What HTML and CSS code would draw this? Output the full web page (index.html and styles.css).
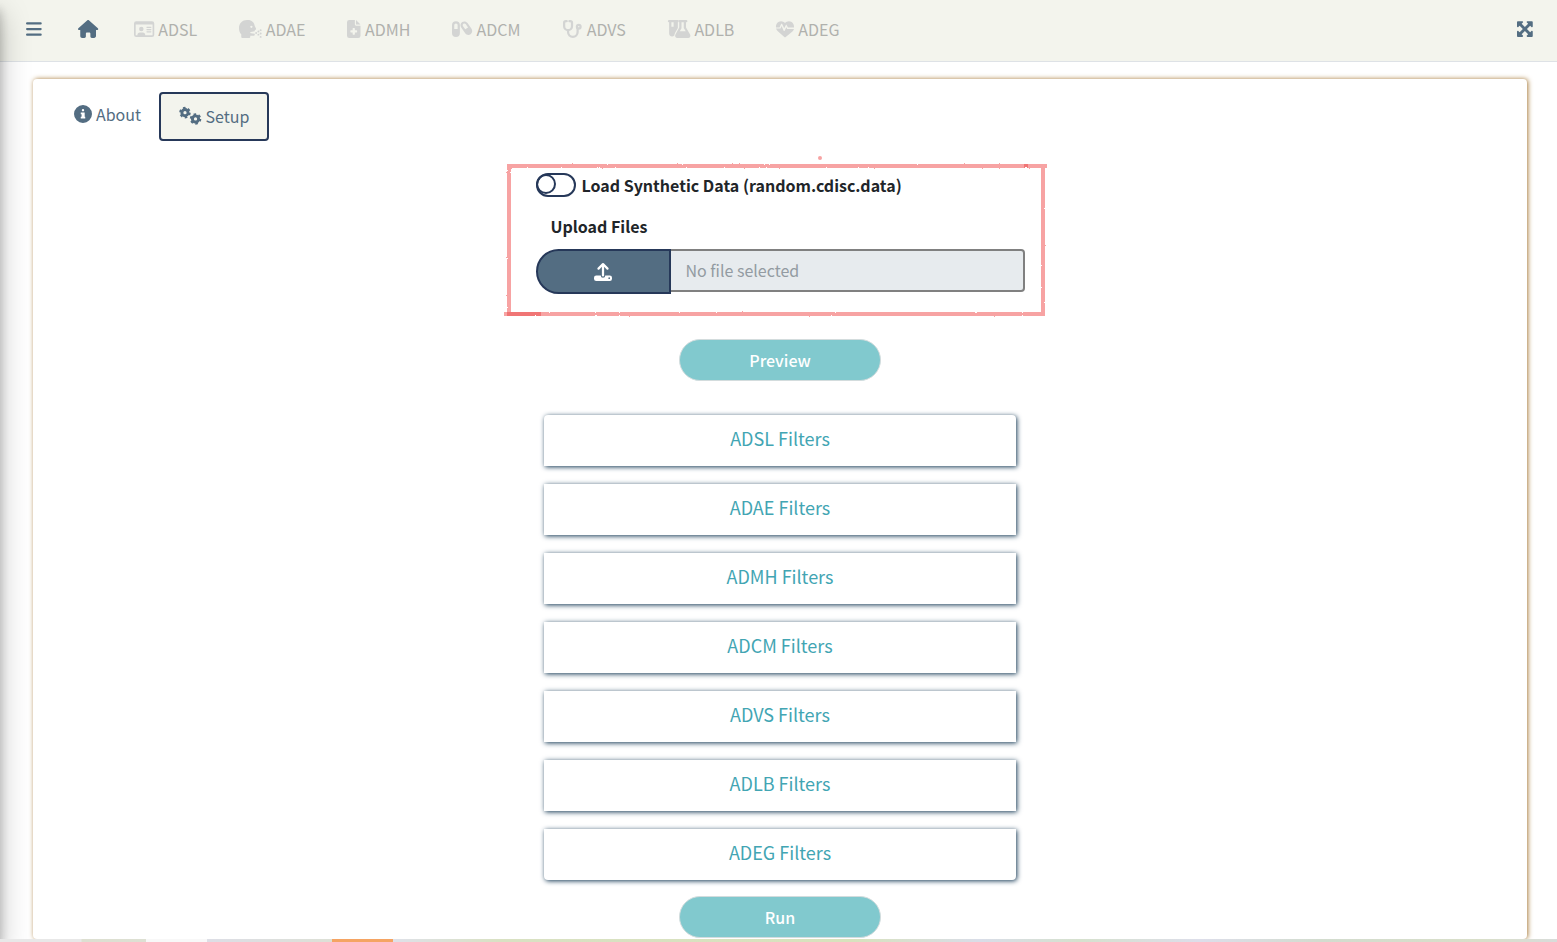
FILE: index.html
```html
<!DOCTYPE html>
<html lang="en">
<head>
<meta charset="utf-8">
<title>Clinical Data Explorer</title>
<link rel="stylesheet" href="styles.css">
</head>
<body>
<aside class="sidebar" aria-hidden="true"></aside>
<header class="navbar">
  <button class="icon-button" type="button" aria-label="Toggle menu">
    <svg class="icon" viewBox="0 0 448 512"><path d="M32 64H416a32 32 0 0 1 0 64H32a32 32 0 0 1 0-64zM32 224H416a32 32 0 0 1 0 64H32a32 32 0 0 1 0-64zM32 384H416a32 32 0 0 1 0 64H32a32 32 0 0 1 0-64z"/></svg>
  </button>
  <a class="home" href="#" aria-label="Home">
    <svg class="icon" viewBox="0 0 576 512"><path d="M575.800 255.500c0 18-15 32.100-32 32.100h-32l.7 160.200c0 36-24 64.200-56.500 64.200H392c-22 0-40-18-40-40v-88c0-17.700-14.300-32-32-32h-64c-17.700 0-32 14.300-32 32v88c0 22-18 40-40 40h-64c-32 0-56-24-56-56V287.600H32c-18 0-32-14-32-32.100 0-9 3-17 10-24L266.400 8c7-7 15-8 22-8s15 2 21 7l255.400 224.500c8 7 12 15 11 24z"/></svg>
  </a>
  <nav class="tabs">
    <a href="#"><svg class="icon" viewBox="0 0 576 512"><path fill-rule="evenodd" d="M64 32H512a64 64 0 0 1 64 64V416a64 64 0 0 1-64 64H64A64 64 0 0 1 0 416V96A64 64 0 0 1 64 32zM48 128V416a16 16 0 0 0 16 16H96c0-53 30-80 70-80h84c40 0 70 27 70 80H512a16 16 0 0 0 16-16V128zM208 192a64 64 0 1 1 0 128 64 64 0 0 1 0-128zM368 192H480a16 16 0 0 1 0 32H368a16 16 0 0 1 0-32zM368 256H480a16 16 0 0 1 0 32H368a16 16 0 0 1 0-32zM368 320H480a16 16 0 0 1 0 32H368a16 16 0 0 1 0-32z"/></svg>ADSL</a>
    <a href="#"><svg class="icon" viewBox="0 0 640 512"><path fill-rule="evenodd" d="M224 0h32c106 0 178 68 192 170l32 63c12 23 0 55-32 55v32l-112 18a18 18 0 0 0 0 36l112 18v24a32 32 0 0 1-32 32h-96v32a32 32 0 0 1-32 32H96a32 32 0 0 1-32-32v-72C22 366 0 303 0 224 0 92 100 0 224 0zM352 160a32 32 0 1 0 0 64 32 32 0 0 0 0-64z"/><g><circle cx="616" cy="288" r="28"/><circle cx="552" cy="328" r="28"/><circle cx="488" cy="368" r="28"/><circle cx="616" cy="384" r="28"/><circle cx="552" cy="416" r="28"/><circle cx="616" cy="480" r="28"/></g></svg>ADAE</a>
    <a href="#"><svg class="icon" viewBox="0 0 384 512"><path fill-rule="evenodd" d="M64 0H224V128a32 32 0 0 0 32 32H384V448a64 64 0 0 1-64 64H64a64 64 0 0 1-64-64V64A64 64 0 0 1 64 0zM256 0V128H384zM160 240v48h-48a16 16 0 0 0-16 16v32a16 16 0 0 0 16 16h48v48a16 16 0 0 0 16 16h32a16 16 0 0 0 16-16v-48h48a16 16 0 0 0 16-16v-32a16 16 0 0 0-16-16h-48v-48a16 16 0 0 0-16-16h-32a16 16 0 0 0-16 16z"/></svg>ADMH</a>
    <a href="#"><svg class="icon" viewBox="0 0 576 512"><path fill-rule="evenodd" d="M112 32A112 112 0 0 1 224 144V368a112 112 0 0 1-224 0V144A112 112 0 0 1 112 32zM64 144V256H160V144a48 48 0 0 0-96 0z"/><path fill-rule="evenodd" d="M262 214c-35-50-24-118 26-154s118-24 154 26L555 249c35 50 24 118-26 154s-118 24-154-26zM314 178l62 88 80-56-62-88c-17-22-47-28-68-12s-28 46-12 68z"/></svg>ADCM</a>
    <a href="#"><svg class="icon" viewBox="0 0 576 512"><g class="outline"><path d="M104 32H80C52 32 32 46 32 78V176a112 112 0 0 0 224 0V78C256 46 236 32 208 32H184M144 290V344a136 136 0 0 0 272 0V238"/><circle cx="448" cy="192" r="52"/></g></svg>ADVS</a>
    <a href="#"><svg class="icon" viewBox="0 0 640 512"><path fill-rule="evenodd" d="M24 0H280a24 24 0 0 1 0 64V230L210 350c-20 34-30 60-30 90-60 60-148 20-148-56V64A32 32 0 0 1 24 0zM96 64V192h64V64zM344 0H520a32 32 0 0 1 0 64h-8V215L628 410c26 46-4 102-56 102H268c-52 0-82-56-56-102L320 215V64a32 32 0 0 1 24-64zM384 64V232L334 320H506L448 224V64z"/></svg>ADLB</a>
    <a href="#"><svg class="icon" viewBox="0 0 512 512"><path d="M0 244h128l32-74 58 134c6 12 20 12 28 0l48-96 24 48H512c-8 28-22 52-44 72L276 480c-12 11-28 11-40 0L44 310c-20-18-36-40-44-66z"/><path d="M0 212c-10-98 56-178 144-178 44 0 82 20 112 52 30-32 68-52 112-52 88 0 154 80 144 178H340l-34-66c-6-12-22-12-28 0l-46 92-56-124c-6-14-26-14-32 0l-42 98z"/></svg>ADEG</a>
  </nav>
  <button class="icon-button expand" type="button" aria-label="Full screen">
    <svg class="icon" viewBox="0 0 448 512"><path d="M24 32H152c20 0 30 24 16 38l-36 36 92 92 92-92-36-36c-14-14-4-38 16-38H424a24 24 0 0 1 24 24V184c0 20-24 30-38 16l-36-36-92 92 92 92 36-36c14-14 38-4 38 16V456a24 24 0 0 1-24 24H296c-20 0-30-24-16-38l36-36-92-92-92 92 36 36c14 14 4 38-16 38H24A24 24 0 0 1 0 456V328c0-20 24-30 38-16l36 36 92-92-92-92-36 36c-14 14-38 4-38-16V56A24 24 0 0 1 24 32z"/></svg>
  </button>
</header>
<main class="page">
  <section class="card">
    <nav class="subtabs">
      <a class="subtab" href="#"><svg class="icon" viewBox="0 0 512 512"><path fill-rule="evenodd" d="M256 0a256 256 0 1 1 0 512 256 256 0 0 1 0-512zM216 336H192v48H320V336H304V216H192v48h24zM256 112a34 34 0 1 0 0 68 34 34 0 0 0 0-68z"/></svg>About</a>
      <a class="subtab active" href="#"><svg class="icon" viewBox="0 0 640 512"><circle class="gear" cx="170" cy="160" r="88"/><circle class="teeth" cx="170" cy="160" r="136" pathLength="120"/><circle class="gear" cx="470" cy="340" r="88"/><circle class="teeth" cx="470" cy="340" r="136" pathLength="120"/></svg>Setup</a>
    </nav>
    <form class="setup">
      <div class="source">
        <svg class="marker" aria-hidden="true" width="100%" height="100%">
          <defs><filter id="crayon" x="-5%" y="-10%" width="110%" height="120%">
            <feTurbulence type="fractalNoise" baseFrequency="0.6" numOctaves="2" seed="4" result="noise"/>
            <feDisplacementMap in="SourceGraphic" in2="noise" scale="2"/>
          </filter></defs>
          <g filter="url(#crayon)">
            <rect class="stroke" x="5" y="9" width="534" height="148"/>
            <path class="stroke" d="M0 157h4M539 9h4"/>
            <path class="stroke heavy" d="M3 157h34M520 9h4"/>
            <circle class="dot" cx="316" cy="1" r="2"/>
          </g>
        </svg>
        <label class="switch"><input type="checkbox">Load Synthetic Data (random.cdisc.data)</label>
        <label class="upload-label" for="file-name">Upload Files</label>
        <div class="upload">
          <button class="browse" type="button" aria-label="Browse files">
            <svg class="icon" viewBox="0 0 512 512"><path d="M288 110V352a32 32 0 0 1-64 0V110l-73 73a32 32 0 0 1-46-46L233 9a32 32 0 0 1 46 0l128 128a32 32 0 0 1-46 46z"/><path fill-rule="evenodd" d="M64 352H192a64 64 0 0 0 128 0H448a64 64 0 0 1 64 64v32a64 64 0 0 1-64 64H64a64 64 0 0 1-64-64v-32a64 64 0 0 1 64-64zM432 408a24 24 0 1 0 0 48 24 24 0 0 0 0-48z"/></svg>
          </button>
          <input class="file-name" id="file-name" type="text" placeholder="No file selected" readonly>
        </div>
      </div>
      <button class="pill" type="button">Preview</button>
      <div class="filters">
        <button type="button">ADSL Filters</button>
        <button type="button">ADAE Filters</button>
        <button type="button">ADMH Filters</button>
        <button type="button">ADCM Filters</button>
        <button type="button">ADVS Filters</button>
        <button type="button">ADLB Filters</button>
        <button type="button">ADEG Filters</button>
      </div>
      <button class="pill" type="button">Run</button>
    </form>
  </section>
</main>
<footer class="edge" aria-hidden="true"></footer>
</body>
</html>
```
FILE: styles.css
```css
*, *::before { box-sizing: border-box; }

body {
  margin: 0;
  height: 100vh;
  display: flex;
  flex-direction: column;
  overflow: hidden;
  background: #fff;
  color: #212529;
  font-family: "Noto Sans CJK SC", "Noto Sans", sans-serif;
  font-size: 16px;
  line-height: 24px;
}

button, input { font: inherit; }
a { color: inherit; text-decoration: none; }
button { cursor: pointer; }

.icon {
  height: 18px;
  flex: none;
  fill: currentColor;
  overflow: visible;
}

/* Collapsed menu: only its shadow reaches the page */
.sidebar {
  position: fixed;
  z-index: 2;
  top: 0;
  bottom: 0;
  left: -250px;
  width: 250px;
  box-shadow: 0 14px 28px rgba(0, 0, 0, .25), 0 10px 10px rgba(0, 0, 0, .22);
}

.navbar {
  flex: none;
  display: flex;
  align-items: center;
  height: 62px;
  padding: 0 24px 3px 26px;
  background: #f3f4ed;
  border-bottom: 1px solid #dee2e6;
  color: #536d82;
}

.icon-button {
  display: flex;
  padding: 0;
  border: 0;
  background: none;
  color: inherit;
}

.home { display: flex; margin: 0 36px; }
.expand { margin-left: auto; }

.tabs { display: flex; gap: 42px; color: #b0b1ad; }
.tabs a { display: flex; align-items: center; gap: 4px; }
.tabs .icon { color: #d3d4d3; }
.outline { fill: none; stroke: currentColor; stroke-width: 64; stroke-linecap: round; }

.page {
  flex: 1;
  min-height: 0;
  padding: 17px 30px 0 33px;
}

.card {
  min-height: 100%;
  padding: 13px 0 0 33px;
  border-radius: 4px;
  background: #fff;
  box-shadow: 1px 0 5px #a87c3c;
}

.subtabs { display: flex; align-items: flex-start; gap: 10px; color: #536d82; }
.subtab { display: flex; align-items: center; gap: 4px; padding: 10px 8px; }
.subtab.active {
  padding: 10px 18px 11px;
  min-height: 49px;
  border: 2px solid #263859;
  border-radius: 4px;
  background: #f3f4ed;
}
.gear { fill: none; stroke: currentColor; stroke-width: 84; }
.teeth { fill: none; stroke: currentColor; stroke-width: 56; stroke-dasharray: 10 10; }

.setup {
  display: flex;
  flex-direction: column;
  align-items: center;
  margin-right: 33px;
}

.source {
  position: relative;
  width: 545px;
  margin: 16px 8px 23px 0;
  padding: 16px 24px 22px 32px;
}

.marker { position: absolute; inset: 0; overflow: visible; pointer-events: none; }
.stroke { fill: none; stroke: #f7a3a3; stroke-width: 4; }
.heavy { stroke: #f07575; }
.dot { fill: #f7a3a3; }

.switch { display: flex; align-items: center; gap: 6px; font-weight: 700; }
.switch input {
  appearance: none;
  width: 40px;
  height: 24px;
  margin: 0;
  border: 2px solid #263859;
  border-radius: 12px;
  background: #fff;
}
.switch input::before {
  content: "";
  display: block;
  width: 20px;
  height: 20px;
  margin: -1px 0 0 -2px;
  border: 2px solid #263859;
  border-radius: 50%;
}

.upload-label { display: block; margin: 17px 0 11px 15px; font-weight: 700; }
.upload { display: flex; align-items: flex-start; }
.browse {
  width: 135px;
  height: 45px;
  display: flex;
  align-items: center;
  justify-content: center;
  border: 2px solid #263859;
  border-radius: 24px 0 0 24px;
  background: #536d82;
  color: #fff;
}
.file-name {
  flex: 1;
  min-width: 0;
  height: 43px;
  padding: 0 15px 2px;
  border: 2px solid #808080;
  border-left: 0;
  border-radius: 0 4px 4px 0;
  background: #e7ebee;
}
.file-name::placeholder { color: #939ba2; opacity: 1; }

.pill {
  width: 202px;
  height: 42px;
  padding: 0;
  border: 1px solid #d3dcdd;
  border-radius: 21px;
  background: #81c9ce;
  color: #fff;
  font-weight: 500;
}

.filters {
  display: grid;
  gap: 18px;
  width: 472px;
  margin: 34px 0 16px;
}
.filters button {
  height: 51px;
  padding: 0 0 5px;
  border: 0;
  background: #fff;
  color: #42a5b3;
  font-size: 18px;
  box-shadow: 1px 1px 5px #163a56;
}
.filters button:first-child { border-radius: 4px 4px 0 0; }
.filters button:last-child { border-radius: 0 0 4px 4px; }

.edge {
  flex: none;
  position: relative;
  z-index: 3;
  height: 3px;
  background: linear-gradient(to right,
    #e8e8e8 81px, #dddfd1 82px, #dde0d3 146px, #f8f8f8 146px, #f8f8f8 207px,
    #dddee6 207px, #dde0d6 332px, #f5a463 332px, #f5a463 393px,
    #dfe1e9 393px, #d9e1c3 500px, #d8e2bd 850px, #d9dde8 980px, #d6e1ce 1080px,
    #dddeea 1200px, #d3dccf 1320px, #d9dfc9 1480px, #d9dcda);
}
```
